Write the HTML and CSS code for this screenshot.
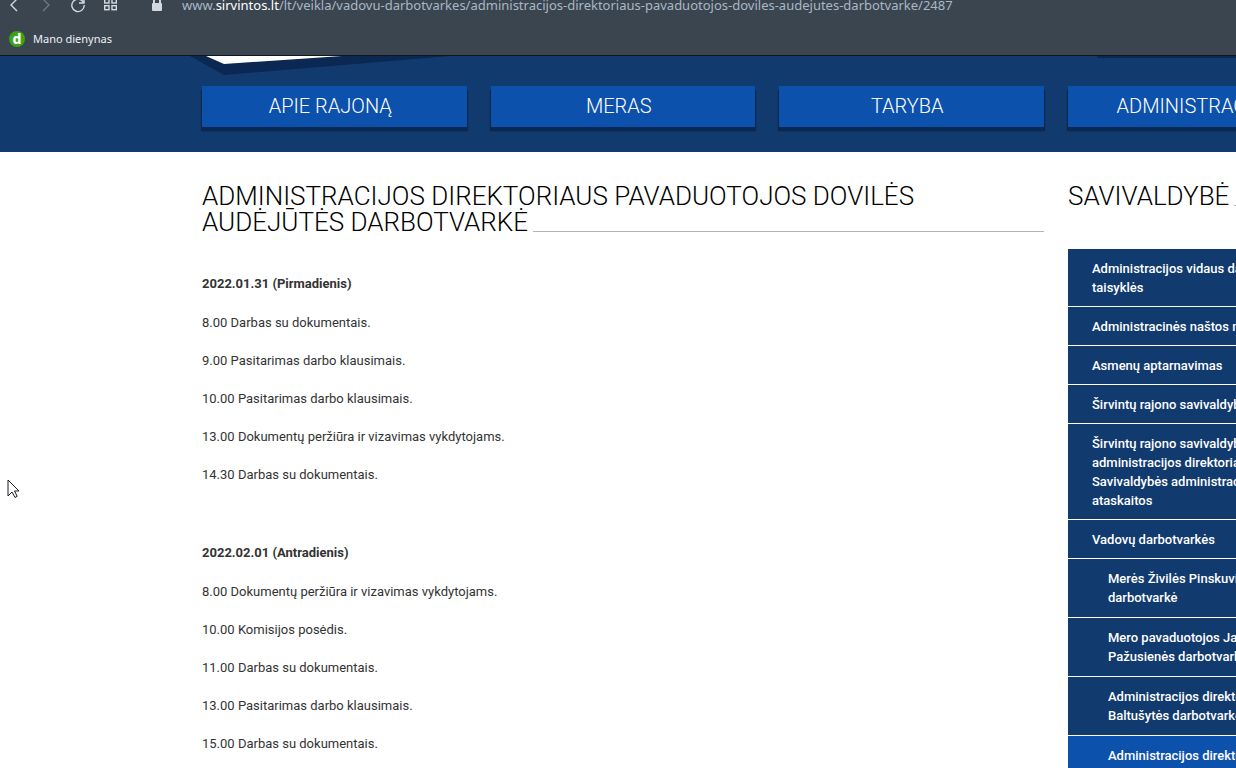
FILE: index.html
```html
<!DOCTYPE html>
<html lang="lt">
<head>
  <meta charset="UTF-8">
  <meta name="viewport" content="width=device-width, initial-scale=1.0">
  <title>Administracijos direktoriaus pavaduotojos darbotvarkė</title>
  <link rel="stylesheet" href="styles.css">
</head>
<body>
  <div class="browser">
    <div class="toolbar">
      <button class="tool back" aria-label="Back">
        <svg width="16" height="16" viewBox="0 0 16 16"><path d="M11 2L5 8l6 6"/></svg>
      </button>
      <button class="tool forward" aria-label="Forward">
        <svg width="16" height="16" viewBox="0 0 16 16"><path d="M5 2l6 6-6 6"/></svg>
      </button>
      <button class="tool reload" aria-label="Reload">
        <svg width="16" height="16" viewBox="0 0 16 16"><path d="M13.500 5.500A6.200 6.200 0 1 0 14.200 8M14 1v5H9"/></svg>
      </button>
      <button class="tool tiles" aria-label="Start page">
        <svg width="16" height="16" viewBox="0 0 16 16"><rect x="2.700" y="1.700" width="4.300" height="4.300"/><rect x="10" y="1.700" width="4.300" height="4.300"/><rect x="2.700" y="8.700" width="4.300" height="4"/><rect x="10" y="8.700" width="4.300" height="4"/></svg>
      </button>
      <svg class="lock" width="12" height="16" viewBox="0 0 12 16"><path d="M3 8V4a3 3 0 0 1 6 0v4" fill="none" stroke="#d3d9de" stroke-width="2"/><rect x="1" y="6" width="10" height="8" rx="1" fill="#d3d9de"/></svg>
      <a class="address" href="#">www.<span class="domain">sirvintos.lt</span>/lt/veikla/vadovu-darbotvarkes/administracijos-direktoriaus-pavaduotojos-doviles-audejutes-darbotvarke/2487</a>
    </div>
    <div class="bookmarks">
      <a class="bookmark" href="#"><span class="favicon">d</span>Mano dienynas</a>
    </div>
  </div>

  <header class="header">
    <div class="container">
      <div class="header-top">
        <svg class="logo-edge" width="260" height="20" viewBox="0 0 260 20">
          <path d="M0 0l34 19L260 0z" fill="#0a2852"/>
          <path d="M16 0l18 8L152 0z" fill="#fff"/>
        </svg>
        <div class="search-edge"></div>
      </div>
      <nav class="menu">
        <a href="#">APIE RAJONĄ</a>
        <a href="#">MERAS</a>
        <a href="#">TARYBA</a>
        <a href="#">ADMINISTRACIJA</a>
      </nav>
    </div>
  </header>

  <div class="container page">
    <main class="content">
      <h1 class="title"><span>ADMINISTRACIJOS DIREKTORIAUS PAVADUOTOJOS DOVILĖS AUDĖJŪTĖS DARBOTVARKĖ</span></h1>
      <section class="day">
        <h2>2022.01.31 (Pirmadienis)</h2>
        <p>8.00 Darbas su dokumentais.</p>
        <p>9.00 Pasitarimas darbo klausimais.</p>
        <p>10.00 Pasitarimas darbo klausimais.</p>
        <p>13.00 Dokumentų peržiūra ir vizavimas vykdytojams.</p>
        <p>14.30 Darbas su dokumentais.</p>
      </section>
      <section class="day">
        <h2>2022.02.01 (Antradienis)</h2>
        <p>8.00 Dokumentų peržiūra ir vizavimas vykdytojams.</p>
        <p>10.00 Komisijos posėdis.</p>
        <p>11.00 Darbas su dokumentais.</p>
        <p>13.00 Pasitarimas darbo klausimais.</p>
        <p>15.00 Darbas su dokumentais.</p>
      </section>
    </main>

    <aside class="sidebar">
      <h2 class="title"><span>SAVIVALDYBĖ</span></h2>
      <ul class="side-menu">
        <li><a href="#">Administracijos vidaus darbo taisyklės</a></li>
        <li><a href="#">Administracinės naštos mažinimas</a></li>
        <li><a href="#">Asmenų aptarnavimas</a></li>
        <li><a href="#">Širvintų rajono savivaldybė</a></li>
        <li><a href="#">Širvintų rajono savivaldybės administracijos direktoriaus ir Savivaldybės administracijos ataskaitos</a></li>
        <li><a href="#">Vadovų darbotvarkės</a></li>
        <li class="sub"><a href="#">Merės Živilės Pinskuvienės darbotvarkė</a></li>
        <li class="sub"><a href="#">Mero pavaduotojos Jadvygos Pažusienės darbotvarkė</a></li>
        <li class="sub"><a href="#">Administracijos direktorės Baltušytės darbotvarkė</a></li>
        <li class="sub active"><a href="#">Administracijos direktoriaus pavaduotojos darbotvarkė</a></li>
      </ul>
    </aside>
  </div>

  <svg class="cursor" width="13" height="20" viewBox="0 0 13 20"><path d="M1 1v16l4-4 3 5.500 2.200-1.200L7.500 12H12z" fill="#fff" stroke="#1c1c2b"/></svg>
</body>
</html>
```
FILE: styles.css
```css
* {
  box-sizing: border-box;
}
body {
  margin: 0;
  height: 100vh;
  overflow: hidden;
  background: #fff;
  color: #333;
  font-family: Roboto, sans-serif;
  font-size: 13px;
  line-height: 19px;
}
a {
  color: inherit;
  text-decoration: none;
}

/* browser bars */
.browser {
  background: #3a4550;
  border-bottom: 1px solid #12161c;
  font-family: "Noto Sans", sans-serif;
  overflow: hidden;
}
.toolbar {
  display: flex;
  align-items: center;
  height: 34px;
  margin-top: -12px;
  padding-left: 6px;
}
.tool {
  display: flex;
  width: 16px;
  height: 16px;
  margin-right: 16px;
  padding: 0;
  border: none;
  background: none;
}
.tool svg {
  fill: none;
  stroke: #d3d9de;
  stroke-width: 1.4;
}
.forward svg {
  stroke: #6d7882;
}
.tiles {
  margin-right: 33px;
}
.lock {
  margin-right: 19px;
}
.address {
  color: #a9b8c6;
  font-size: 13px;
  white-space: nowrap;
}
.domain {
  color: #fff;
}
.bookmarks {
  display: flex;
  align-items: center;
  height: 33px;
  padding-left: 9px;
}
.bookmark {
  display: flex;
  align-items: center;
  gap: 8px;
  color: #eef1f4;
  font-size: 11px;
}
.favicon {
  width: 16px;
  height: 16px;
  border-radius: 50%;
  background: #3fa215;
  color: #fff;
  font-size: 14px;
  font-weight: 800;
  line-height: 15px;
  text-align: center;
}

/* site header */
.container {
  width: 1130px;
  margin-left: 202px;
}
.header {
  background: #113a6e;
  padding-bottom: 25px;
}
.header-top {
  display: flex;
  justify-content: space-between;
  height: 30px;
}
.logo-edge {
  margin-left: -12px;
}
.search-edge {
  width: 235px;
  height: 2px;
  background: #0a2852;
  border-radius: 0 0 4px 4px;
}
.menu {
  display: grid;
  grid-template-columns: repeat(4, 1fr);
  gap: 24px;
}
.menu a {
  height: 41px;
  padding-right: 8px;
  background: #0c51ac;
  box-shadow: -1px 4px 1px #0a2852, 1px 4px 1px #0a2852;
  color: #fff;
  font-size: 20px;
  font-weight: 300;
  line-height: 40px;
  text-align: center;
}

/* page */
.page {
  display: grid;
  grid-template-columns: 1fr 264px;
  gap: 24px;
  padding-top: 31px;
}
.title {
  margin: 0;
  background: linear-gradient(#b5b5b5, #b5b5b5) left bottom 3px / 100% 1px no-repeat;
  color: #000;
  font-size: 26px;
  font-weight: 300;
  line-height: 26px;
}
.title span {
  padding-right: 5px;
  background: #fff;
}
.content .title {
  margin-bottom: 39px;
}
.day {
  margin-bottom: 59px;
}
.day h2 {
  margin: 0 0 20px;
  font-size: 13px;
  font-weight: 700;
}
.day p {
  margin: 0 0 19px;
}
.sidebar .title {
  margin-bottom: 40px;
}
.side-menu {
  margin: 0;
  padding: 0;
  list-style: none;
}
.side-menu a {
  display: block;
  padding: 10px 20px 9px 24px;
  border-bottom: 1px solid #fff;
  background: #113a6e;
  color: #fff;
  font-weight: 500;
}
.side-menu .sub a {
  padding: 10px 20px 10px 40px;
}
.side-menu .active a {
  background: #0c51ac;
}

/* mouse pointer lies over the page */
.cursor {
  position: absolute;
  left: 7px;
  top: 479px;
}
```
